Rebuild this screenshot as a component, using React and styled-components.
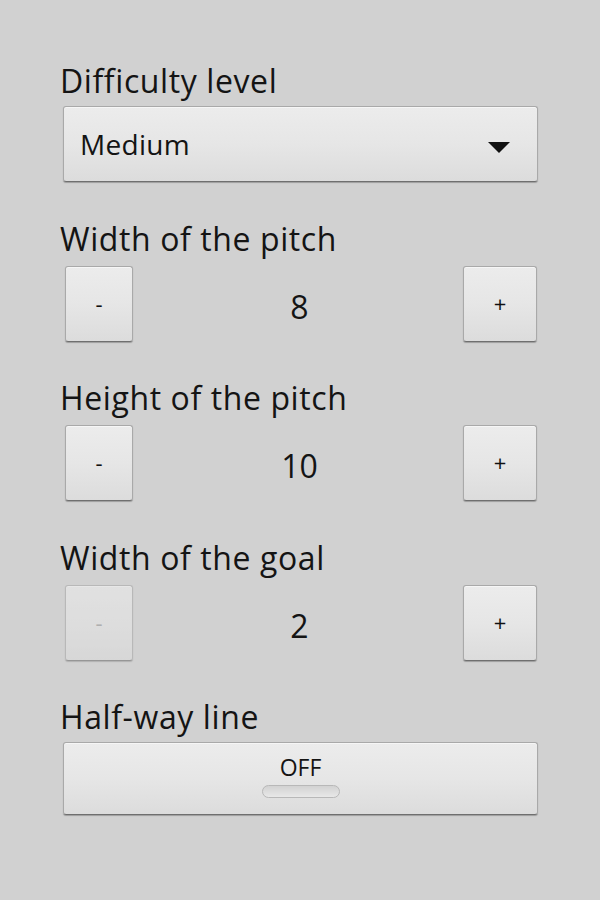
import React from "react";
import styled, { createGlobalStyle } from "styled-components";

const Global = createGlobalStyle`
  html, body { margin: 0; padding: 0; background: #d1d1d1; }
  body { font-family: "Open Sans", "DejaVu Sans", sans-serif; color: #141414; }
`;

const Page = styled.div`
  width: 600px;
  height: 900px;
  box-sizing: border-box;
  padding: 61px 62px 0 59px;
  display: flex;
  flex-direction: column;
  gap: 36.6px;
`;

const Section = styled.div`
  display: flex;
  flex-direction: column;
  gap: ${p => p.$gap ?? 5}px;
`;

const Label = styled.div`
  font-size: 32px;
  line-height: 40px;
  padding-left: 1px;
  letter-spacing: 0.6px;
`;

const Raised = styled.div`
  box-sizing: border-box;
  border: 1px solid #a9a9a9;
  border-bottom-color: #6f6f6f;
  border-radius: 3px;
  background: linear-gradient(180deg, #ececec 0%, #e6e6e6 50%, #dcdcdc 100%);
  box-shadow: inset 0 1px 0 #f6f6f6, 0 1px 1px rgba(0,0,0,0.25);
`;

const Spinner = styled(Raised)`
  height: 76px;
  margin-left: 4px;
  display: flex;
  align-items: center;
  justify-content: space-between;
  padding: 0 27px 0 16px;
  font-size: 28px;
  letter-spacing: 0.3px;
`;

const Arrow = styled.svg`
  width: 22px;
  height: 12px;
  margin-top: 7px;
`;

const StepRow = styled.div`
  display: flex;
  align-items: center;
  justify-content: space-between;
  padding: 2px 1px 0 6px;
`;

const StepButton = styled(Raised)`
  width: ${p => p.$w}px;
  height: 76px;
  display: flex;
  align-items: center;
  justify-content: center;
  font-size: 22px;
  color: ${p => (p.$disabled ? "#9a9a9a" : "#111111")};
  opacity: ${p => (p.$disabled ? 0.6 : 1)};
  padding-bottom: 2px;
`;

const Value = styled.div`
  font-size: 32px;
  flex: 1;
  text-align: center;
  padding: 5px 0 0 3px;
`;

const Toggle = styled(Raised)`
  height: 73px;
  margin-left: 4px;
  display: flex;
  flex-direction: column;
  align-items: center;
  padding-top: 8px;
  gap: 2px;
  font-size: 23px;
`;

const Indicator = styled.div`
  width: 78px;
  height: 13px;
  border-radius: 7px;
  box-sizing: border-box;
  border: 1px solid #b8b8b8;
  background: linear-gradient(180deg, #d2d2d2, #e8e8e8);
`;

function Stepper({ label, value, minDisabled }) {
  return (
    <Section>
      <Label>{label}</Label>
      <StepRow>
        <StepButton $w={68} $disabled={minDisabled}>-</StepButton>
        <Value>{value}</Value>
        <StepButton $w={74}>+</StepButton>
      </StepRow>
    </Section>
  );
}

export default function App() {
  return (
    <>
      <Global />
      <Page>
        <Section>
          <Label>Difficulty level</Label>
          <Spinner>
            <span>Medium</span>
            <Arrow viewBox="0 0 22 12">
              <polygon points="0,0 22,0 11,11" fill="#111" />
            </Arrow>
          </Spinner>
        </Section>
        <Stepper label="Width of the pitch" value="8" />
        <Stepper label="Height of the pitch" value="10" />
        <Stepper label="Width of the goal" value="2" minDisabled />
        <Section $gap={5}>
          <Label>Half-way line</Label>
          <Toggle>
            <span>OFF</span>
            <Indicator />
          </Toggle>
        </Section>
      </Page>
    </>
  );
}
